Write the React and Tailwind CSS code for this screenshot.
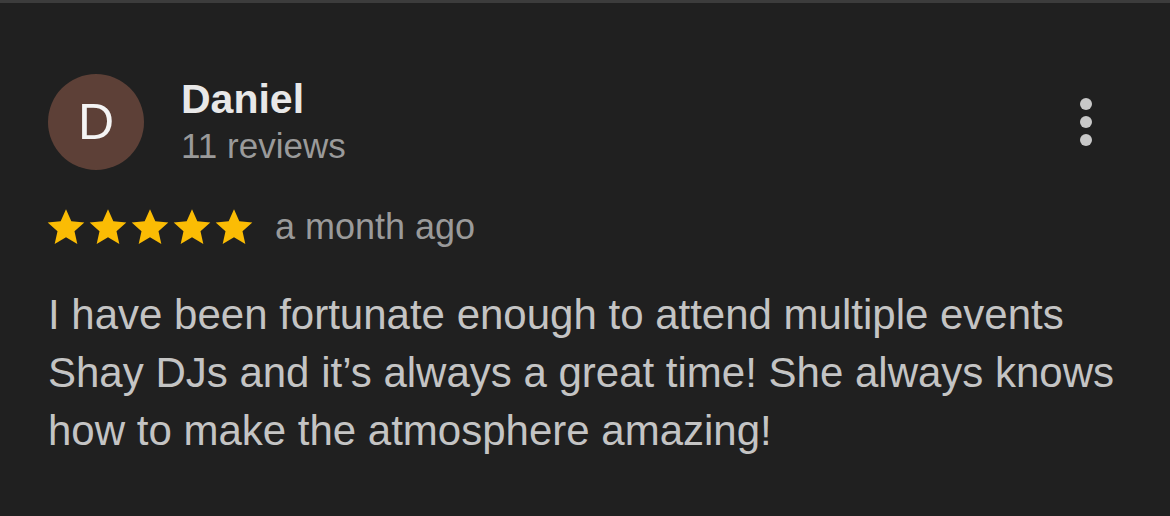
import React from "react";

const Star = () => (
  <svg viewBox="0 0 24 24" className="w-[40px] h-[40px]">
    <path
      fill="#fbbc04"
      d="M12 1.4l3.2 7.2 7.8.7-5.9 5.2 1.7 7.7L12 18.2l-6.8 4 1.7-7.7-5.9-5.2 7.8-.7z"
    />
  </svg>
);

const App = () => {
  return (
    <div className="w-[1170px] h-[516px] bg-[#202020] border-t-[3px] border-[#3c3c3c] font-['Liberation_Sans',Arial,sans-serif] overflow-hidden">
      <div className="px-[48px] pt-[71px]">
        <div className="flex items-start">
          <div className="w-[96px] h-[96px] rounded-full bg-[#5d4037] flex items-center justify-center text-[#f4f4f4] text-[50px] leading-none">
            D
          </div>
          <div className="ml-[37px] mt-[1px] flex flex-col">
            <span className="text-[41px] font-bold text-[#e8e8e8] leading-[48px]">Daniel</span>
            <span className="mt-[3px] text-[35px] text-[#9a9a9a] leading-[40px]">11 reviews</span>
          </div>
          <div className="ml-auto mr-[30px] mt-[24px] flex flex-col gap-[6px]">
            <span className="w-[12px] h-[12px] rounded-full bg-[#c8c8c8]" />
            <span className="w-[12px] h-[12px] rounded-full bg-[#c8c8c8]" />
            <span className="w-[12px] h-[12px] rounded-full bg-[#c8c8c8]" />
          </div>
        </div>
        <div className="flex items-center h-[41px] mt-[36px]">
          <div className="flex gap-[2px] -ml-[2px]">
            <Star />
            <Star />
            <Star />
            <Star />
            <Star />
          </div>
          <span className="ml-[21px] text-[36px] text-[#9a9a9a] leading-[40px]">a month ago</span>
        </div>
        <p className="mt-[39px] text-[42px] leading-[58px] text-[#c4c4c4] whitespace-nowrap">
          I have been fortunate enough to attend multiple events
          <br />
          Shay DJs and it’s always a great time! She always knows
          <br />
          how to make the atmosphere amazing!
        </p>
      </div>
    </div>
  );
};

export default App;
